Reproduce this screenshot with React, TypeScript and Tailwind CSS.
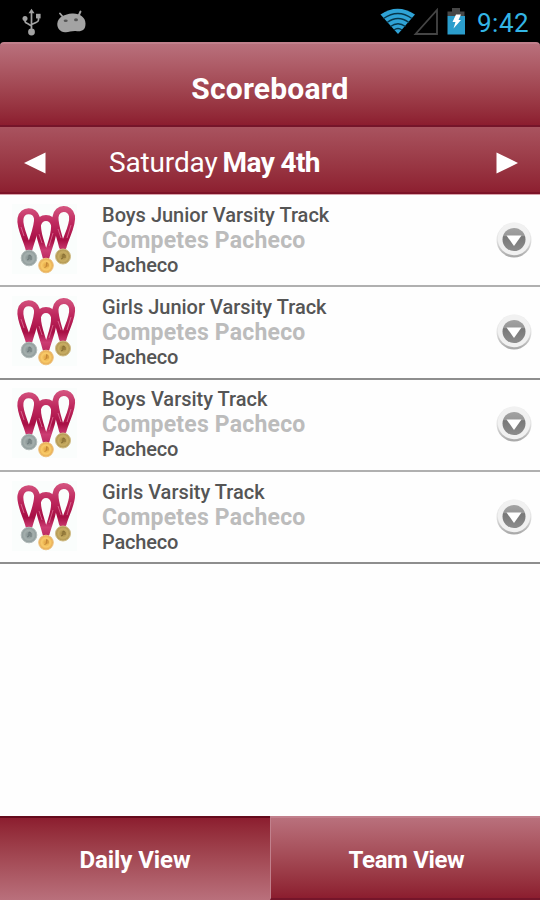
import React from "react";

const rows = [
  { title: "Boys Junior Varsity Track", box: "h-[92px] border-b-[#b0b0b0]" },
  { title: "Girls Junior Varsity Track", box: "h-[93px] border-b-[#8e8e8e]" },
  { title: "Boys Varsity Track", box: "h-[92px] border-b-[#b0b0b0] *:-translate-y-px" },
  { title: "Girls Varsity Track", box: "h-[92px] border-b-[#8e8e8e]" },
];

function Usb() {
  return (
    <svg className="ml-[22px] mt-[8px] h-[28px] w-[20px]" viewBox="0 0 20 28" fill="none" stroke="#a3a3a3" strokeWidth="1.7">
      <path d="M9.5 4v20M3 11v2q0 1.700 2.500 2.500L9.500 18M16.500 8v4q0 1.500-2.500 2.500L9.500 16.500" />
      <g fill="#a3a3a3" stroke="none">
        <path d="M9.500 .8l3 4.400H6.500z" />
        <circle cx="3" cy="10.500" r="2.500" />
        <rect x="14" y="5.800" width="4.600" height="4.600" />
        <circle cx="9.500" cy="24" r="3.400" />
      </g>
    </svg>
  );
}

function Droid() {
  return (
    <svg className="ml-[15px] mt-[9px] h-[26px] w-[32px]" viewBox="0 0 32 26" fill="#a3a3a3">
      <path d="M6 8L3 4.500M21.500 7L23.500 2.500" stroke="#a3a3a3" strokeWidth="1.900" strokeLinecap="round" />
      <path d="M15 4.600C22 4 28.500 8 28.500 14.500C28.500 21 25.500 22.500 20 22.200C15 21.500 12 23.500 8 23.200C3 23 0 19 .3 14.500C1 8 8 5.200 15 4.600Z" />
      <ellipse cx="8.700" cy="11.700" rx="2" ry="1.300" fill="#555" />
      <ellipse cx="19" cy="10.800" rx="2" ry="1.500" fill="#555" />
    </svg>
  );
}

function Wifi() {
  return (
    <svg className="h-[28px] w-[36px]" viewBox="0 0 36 28">
      <path d="M.5 6.500Q17.500-5 35 6.500L18 26Z" fill="#2fa3d6" />
      <g fill="none" stroke="#07364a" strokeWidth="1.300">
        <path d="M3.500 10.500Q18 .5 32 10.500" />
        <path d="M7 14.500Q18 6.500 29 14.500" />
        <path d="M10.500 18.500Q18 13 25.500 18.500" />
        <path d="M14 22Q18 19 22 22" />
      </g>
    </svg>
  );
}

function Battery() {
  return (
    <svg className="ml-[8px] h-[28px] w-[19px]" viewBox="0 0 19 28">
      <path d="M.5 3.500H5V0h8v3.500h4.500V8H.5z" fill="#474747" />
      <path d="M.5 8h17.500v18.500H.5z" fill="#2b9dcc" />
      <path d="M9 6.500h5L11.500 12H14L6.500 20.500L8.500 14H5.500z" fill="#fff" />
    </svg>
  );
}

function Medals() {
  return (
    <svg className="ml-[12px] mt-[9px] h-[70px] w-[65px] shrink-0" viewBox="0 0 65 70">
      <defs>
        <linearGradient id="ribbon" gradientUnits="userSpaceOnUse" x1="0" y1="3" x2="0" y2="54">
          <stop offset="0" stopColor="#d4547f" />
          <stop offset=".3" stopColor="#bf2a5f" />
          <stop offset=".65" stopColor="#a80f45" />
          <stop offset=".85" stopColor="#cc3d73" />
          <stop offset="1" stopColor="#bd2c62" />
        </linearGradient>
        <radialGradient id="silver"><stop offset="0" stopColor="#7d8a8a" /><stop offset=".6" stopColor="#a4afad" /><stop offset="1" stopColor="#8b9898" /></radialGradient>
        <radialGradient id="gold"><stop offset="0" stopColor="#e0a03c" /><stop offset=".6" stopColor="#f9cb69" /><stop offset="1" stopColor="#e3a752" /></radialGradient>
        <radialGradient id="bronze"><stop offset="0" stopColor="#9d823c" /><stop offset=".6" stopColor="#c9ae64" /><stop offset="1" stopColor="#ab914e" /></radialGradient>
      </defs>
      <rect width="65" height="70" fill="#fafdfc" />
      <g fill="none" stroke="url(#ribbon)" strokeWidth="6" strokeLinejoin="round">
        <path d="M16.500 45C14 35 7 23 8.500 14.500C10 5 23 5 25 14C26 22 20 35 17.500 45Z" />
        <path d="M50 43C48 33 43 22 43.500 13C45 2.500 58 2.500 60 12C61.500 21 54 33 51.500 43Z" />
        <path d="M33.500 53C31.500 43 25.500 31 26 21C28 11.500 40 11.500 42 21C43 31 37 43 34.500 53Z" />
      </g>
      <path d="M9 23l3 9M27 30l3 9M41 29l-4 13M46 25l3 9M59 21l-4 13" stroke="#dd7197" strokeWidth=".8" />
      <circle cx="17" cy="54" r="7.800" fill="url(#silver)" stroke="#b3bcba" />
      <circle cx="34" cy="61.500" r="7.300" fill="url(#gold)" stroke="#efc27d" />
      <circle cx="51" cy="52.500" r="7.500" fill="url(#bronze)" stroke="#d1bd85" />
      <path d="M15 56l2-1v-4l2 1v4" fill="none" stroke="#6c7879" />
      <path d="M32.500 63.500l2-1v-4l1.500 1v3" fill="none" stroke="#c48737" />
      <path d="M49 55l2-1v-4l2 1v3" fill="none" stroke="#846b32" />
    </svg>
  );
}

function DownButton() {
  return (
    <svg className="ml-auto mr-[7px] mt-[26px] h-[40px] w-[38px] shrink-0" viewBox="0 0 38 40">
      <defs>
        <linearGradient id="face" x1="0" y1="0" x2="0" y2="1"><stop offset="0" stopColor="#f0f0f0" /><stop offset=".5" stopColor="#e4e4e4" /><stop offset="1" stopColor="#a6a6a6" /></linearGradient>
        <linearGradient id="core" x1="0" y1="0" x2="0" y2="1"><stop offset="0" stopColor="#a2a2a2" /><stop offset=".33" stopColor="#989898" /><stop offset=".38" stopColor="#787878" /><stop offset="1" stopColor="#8c8c8c" /></linearGradient>
      </defs>
      <circle cx="19" cy="19" r="17.500" fill="url(#face)" />
      <circle cx="19" cy="18" r="16.200" fill="#f1f1f1" />
      <circle cx="19" cy="18.500" r="11.500" fill="url(#core)" />
      <path d="M11.500 14.500H26.500L19 25Z" fill="#fff" />
    </svg>
  );
}

export default function App() {
  return (
    <div className="flex h-[900px] w-[540px] flex-col overflow-hidden bg-[#fefefe] font-['Roboto',sans-serif]">
      <div className="flex h-[42px] shrink-0 bg-black">
        <Usb />
        <Droid />
        <div className="ml-auto mr-[9px] flex pt-[8px]">
          <Wifi />
          <svg className="-ml-[3px] h-[28px] w-[26px]" viewBox="0 0 26 28"><path d="M2.500 26H24V2Z" fill="none" stroke="#454545" strokeWidth="1.800" /></svg>
          <Battery />
          <span className="ml-[11px] w-[54px] whitespace-nowrap text-[26px] leading-[30px] tracking-[0.5px] text-[#33b5e5]">9:42</span>
        </div>
      </div>
      <div className="shrink-0 bg-black">
        <header className="flex h-[85px] items-center justify-center rounded-t-[4px] border-t-2 border-b-2 border-t-[#c1808c] border-b-[#75152a] bg-gradient-to-b from-[#b9707c] to-[#8c1d2f] pt-[9px]">
          <h1 className="text-[30px] leading-[34px] font-bold tracking-[0.2px] text-white">Scoreboard</h1>
        </header>
      </div>
      <div className="flex h-[68px] shrink-0 items-center border-b border-b-[#d9a3ab] bg-gradient-to-b from-[#a9535f] to-[#8c1d2f] text-white shadow-[inset_0_-2px_0_#7d1328]">
        <svg className="ml-[24px] mt-[4px] h-[22px] w-[22px]" viewBox="0 0 22 22"><path d="M0 11L21.500 .5V21.500Z" fill="#fff" /></svg>
        <div className="ml-[63px] mt-[4px] flex items-baseline gap-[5px] text-[28px] leading-[34px] tracking-[-0.15px] whitespace-nowrap"><span>Saturday</span><b className="tracking-[-0.6px]">May 4th</b></div>
        <svg className="ml-auto mr-[22px] mt-[4px] h-[22px] w-[22px]" viewBox="0 0 22 22"><path d="M22 11L.5 .5V21.500Z" fill="#fff" /></svg>
      </div>
      <main className="flex-1">
        {rows.map((r) => (
          <section key={r.title} className={`flex border-b-2 ${r.box}`}>
            <Medals />
            <div className="ml-[25px] pt-[8px] whitespace-nowrap text-[#555]">
              <div className="text-[20px] leading-[24px] font-medium">{r.title}</div>
              <div className="pt-px text-[23px] leading-[25px] font-bold tracking-[0.2px] text-[#bcbcbc]">Competes Pacheco</div>
              <div className="text-[20px] leading-[24px] font-medium tracking-[-0.2px]">Pacheco</div>
            </div>
            <DownButton />
          </section>
        ))}
      </main>
      <nav className="flex h-[84px] shrink-0 text-[24px] leading-[28px] font-bold text-white">
        <button className="flex w-[270px] items-center justify-center border-t-2 border-t-[#650b1c] bg-gradient-to-b from-[#8c1d2f] to-[#b9707c] pt-[2px] tracking-[-0.1px]">Daily View</button>
        <button className="flex w-[270px] items-center justify-center border-t-2 border-b-2 border-l border-t-[#c1808c] border-b-[#75152a] border-l-[#c1808c] bg-gradient-to-b from-[#b9707c] to-[#8c1d2f] pt-[4px] pl-[2px] tracking-[-0.35px]">Team View</button>
      </nav>
    </div>
  );
}
